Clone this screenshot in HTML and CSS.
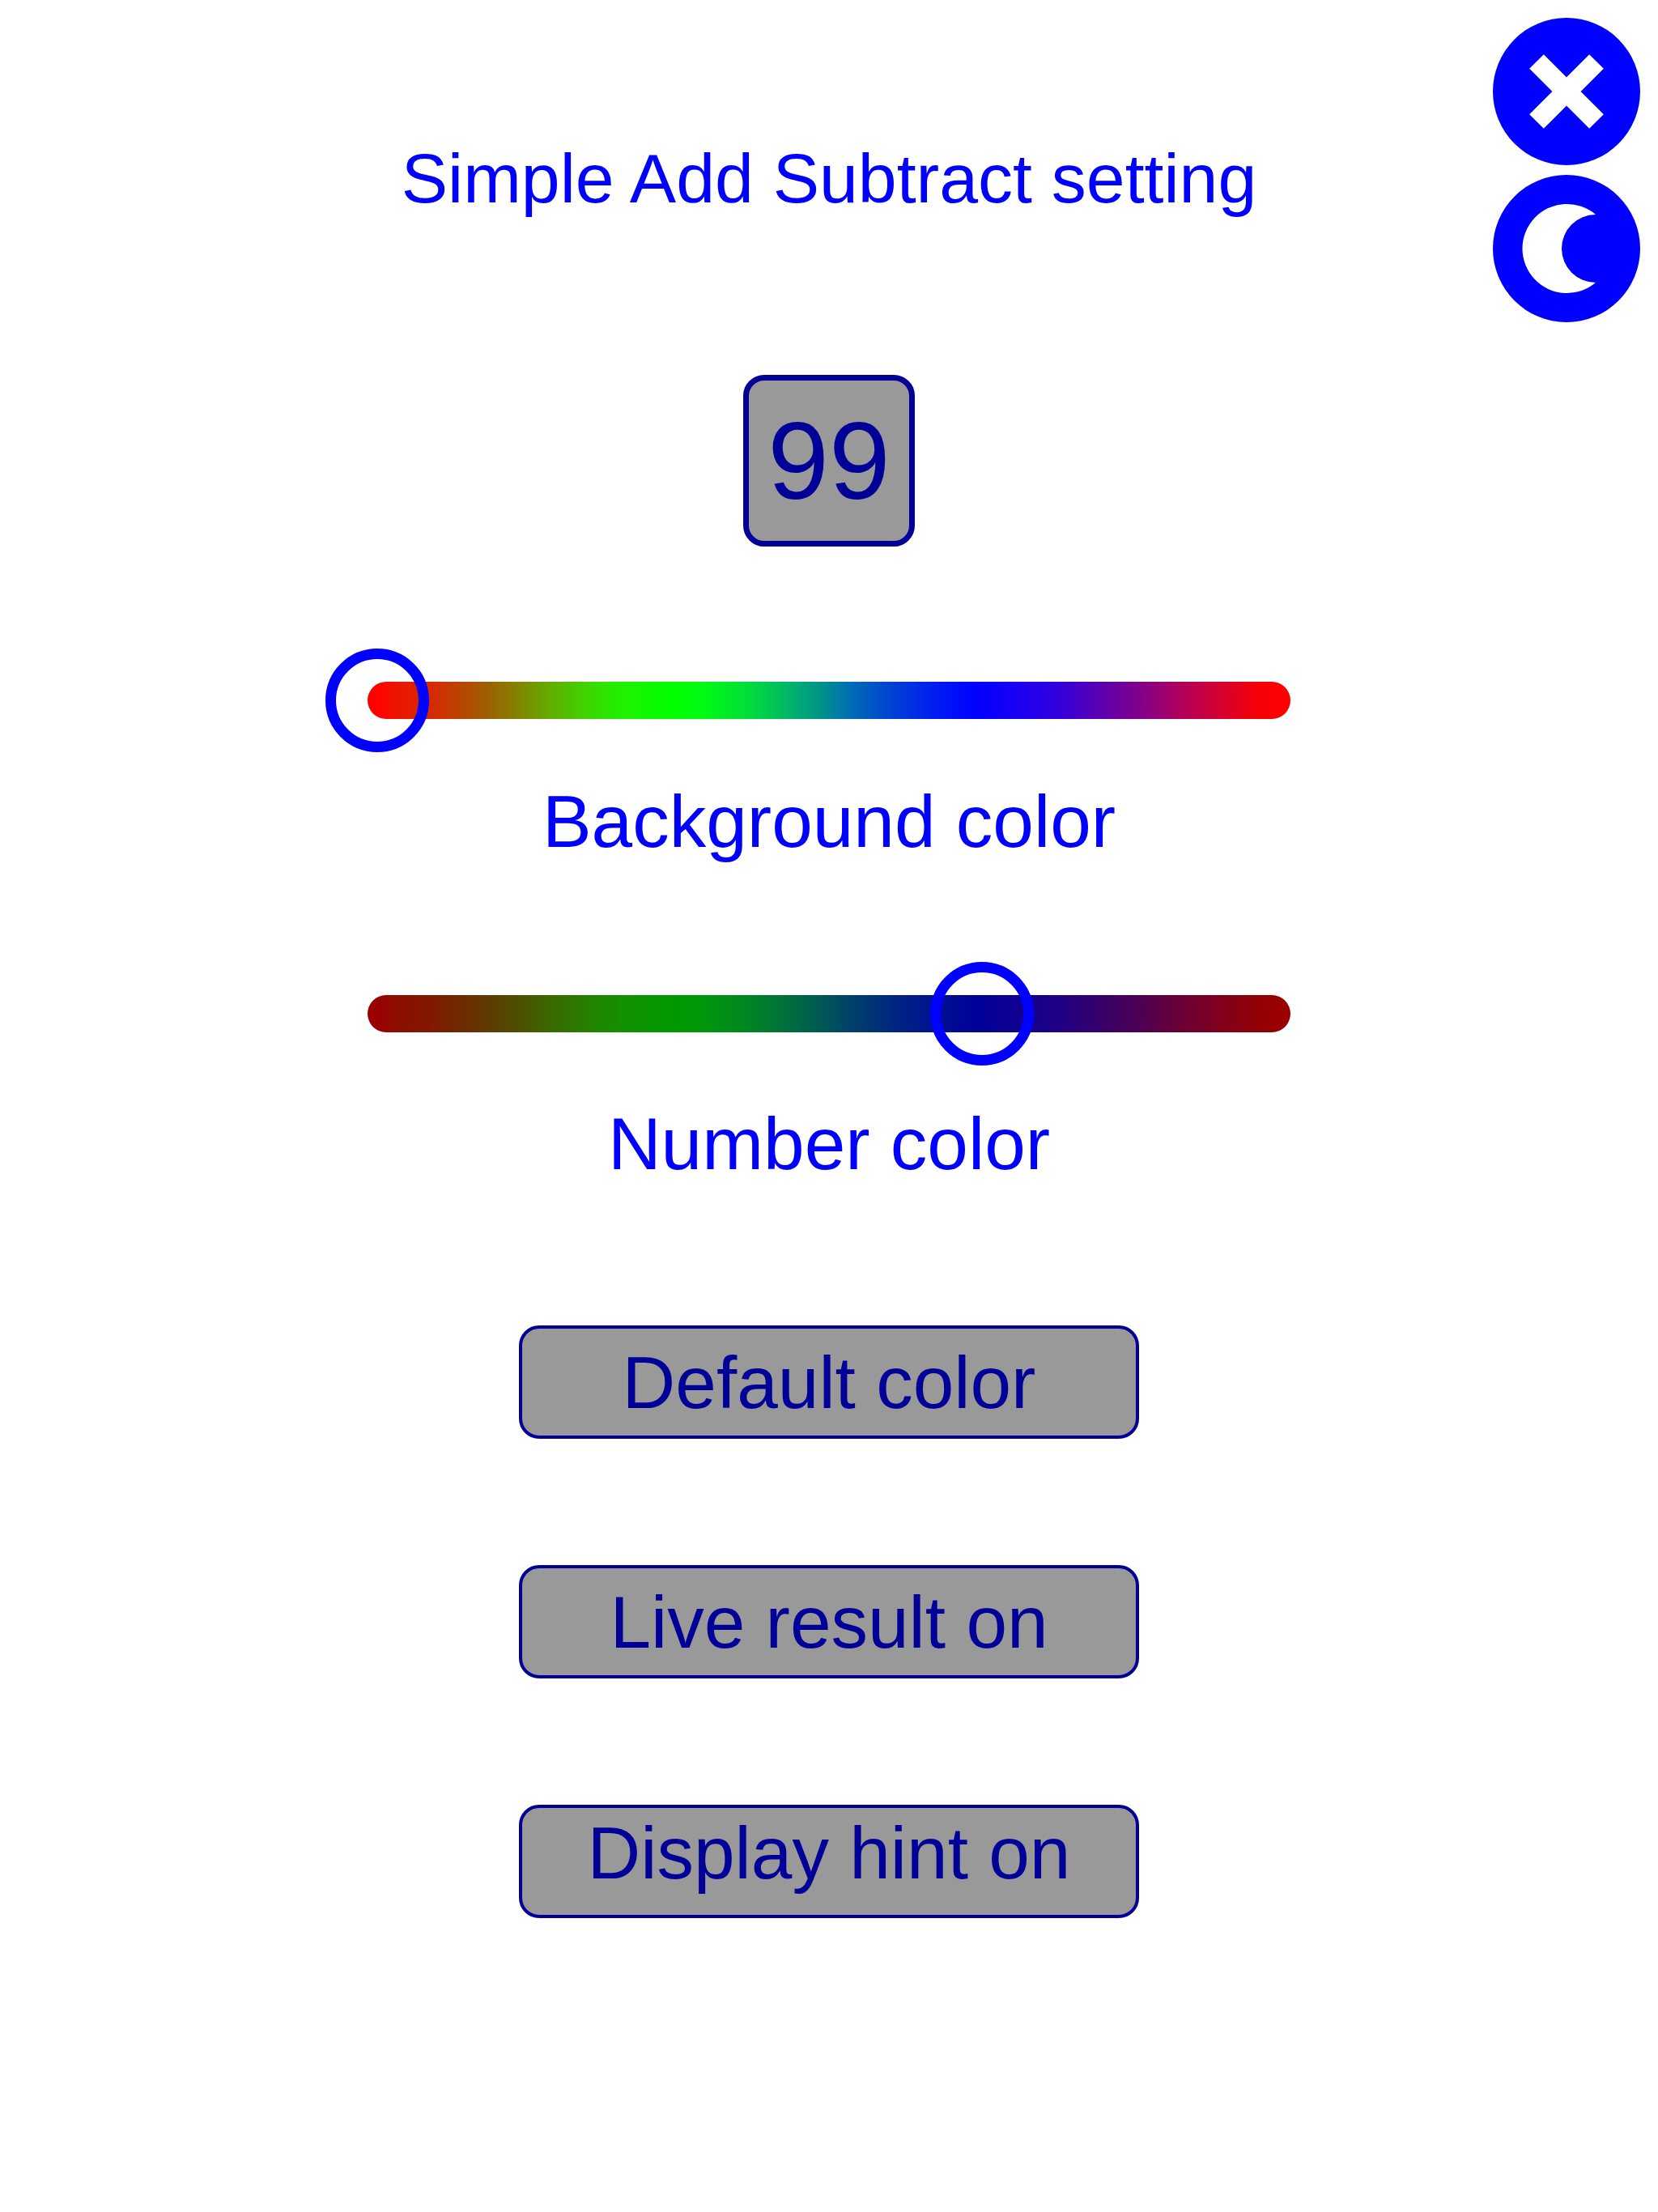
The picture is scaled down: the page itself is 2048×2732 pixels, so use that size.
FILE: index.html
```html
<!DOCTYPE html>
<html lang="en">
<head>
    <meta charset="UTF-8">
    <meta name="viewport" content="width=device-width, initial-scale=1">
    <title>Simple Add Subtract setting</title>
    <link rel="stylesheet" href="styles.css">
</head>
<body>
    <div class="page">
        <main class="settings">
            <h1>Simple Add Subtract setting</h1>

            <output class="preview" for="background-color number-color">99</output>

            <div class="color-setting">
                <input type="range" class="slider" id="background-color" min="0" max="360" value="0">
                <label class="descender" for="background-color">Background color</label>
            </div>

            <div class="color-setting">
                <input type="range" class="slider slider-dark" id="number-color" min="0" max="360" value="241">
                <label for="number-color">Number color</label>
            </div>

            <div class="options">
                <button type="button" class="option-button">Default color</button>
                <button type="button" class="option-button">Live result on</button>
                <button type="button" class="option-button descender">Display hint on</button>
            </div>
        </main>

        <nav class="toolbar">
            <button type="button" class="icon-button" aria-label="Close">
                <svg viewBox="0 0 182 182">
                    <circle cx="91" cy="91" r="91" fill="#00f"/>
                    <path d="M54 54L128 128M128 54L54 128" stroke="#fff" stroke-width="25"/>
                </svg>
            </button>
            <button type="button" class="icon-button" aria-label="Dark mode">
                <svg viewBox="0 0 182 182">
                    <circle cx="91" cy="91" r="91" fill="#00f"/>
                    <path d="M127 49A55 55 0 1 0 127 133A42 42 0 1 1 127 49Z" fill="#fff"/>
                </svg>
            </button>
        </nav>
    </div>
</body>
</html>
```

FILE: styles.css
```css
body {
    background-color: #fff;
    color: #00f;
    font-family: "Liberation Sans", Arial, sans-serif;
    margin: 0;
}

.page {
    display: grid;
    grid-template-columns: 1fr minmax(0, 1140px) 1fr;
}

.settings {
    grid-column: 2;
    display: flex;
    flex-direction: column;
    align-items: center;
    padding: 170px 0;
}

h1 {
    font-size: 86px;
    font-weight: normal;
    line-height: 100px;
    margin: 0 0 193px;
    white-space: nowrap;
}

.preview {
    box-sizing: border-box;
    width: 212px;
    height: 212px;
    margin-bottom: 167px;
    border: 7px solid #009;
    border-radius: 26px;
    background-color: #999;
    color: #009;
    font-size: 136px;
    line-height: 198px;
    text-align: center;
}

/* Color sliders */
.color-setting {
    display: flex;
    flex-direction: column;
    align-items: center;
    gap: 88px;
    width: 100%;
    margin-bottom: 153px;
}

label {
    box-sizing: border-box;
    height: 100px;
    display: flex;
    align-items: center;
    font-size: 91px;
    line-height: 78px;
}

/* Keeps text with tails visually centered */
.descender {
    padding-bottom: 22px;
}

.slider {
    -webkit-appearance: none;
    appearance: none;
    width: 100%;
    height: 46px;
    margin: 0;
    border-radius: 23px;
    cursor: pointer;
    --hues: linear-gradient(to right,
        #f00 1%, #ee1400 3%, #d62a00 7%, #9c6000 13%, #848000 16%,
        #60b000 20%, #34e000 25%, #1cf200 28%, #0f0 33%,
        #00fc10 36%, #00e038 41%, #00bc60 45%, #009488 49%, #0070b0 52%,
        #0040d6 57%, #0020f0 61%, #00f 66%,
        #1800f4 70%, #3400dc 75%, #5800b4 79%, #840088 84%, #b0005c 88%,
        #d20034 92%, #f2000c 96%, #f00 99%);
    background: var(--hues);
}

.slider-dark {
    background: linear-gradient(rgba(0, 0, 0, 0.4), rgba(0, 0, 0, 0.4)), var(--hues);
}

.slider::-webkit-slider-runnable-track {
    height: 46px;
    margin: 0 -52px;
}

.slider::-webkit-slider-thumb {
    -webkit-appearance: none;
    box-sizing: border-box;
    width: 128px;
    height: 128px;
    margin-top: -41px;
    border: 13px solid #00f;
    border-radius: 50%;
    background: transparent;
}

/* Option buttons */
.options {
    display: flex;
    flex-direction: column;
    gap: 156px;
    margin-top: 21px;
}

.option-button {
    box-sizing: border-box;
    width: 766px;
    height: 140px;
    padding-top: 2px;
    border: 4px solid #009;
    border-radius: 25px;
    background-color: #999;
    color: #009;
    font-family: inherit;
    font-size: 91px;
    line-height: 100px;
    cursor: pointer;
}

/* Round icons in the corner */
.toolbar {
    grid-column: 3;
    justify-self: end;
    display: flex;
    flex-direction: column;
    gap: 12px;
    padding: 22px;
}

.icon-button {
    width: 182px;
    height: 182px;
    padding: 0;
    border: none;
    border-radius: 50%;
    background: none;
    cursor: pointer;
}

.icon-button svg {
    display: block;
}
```
